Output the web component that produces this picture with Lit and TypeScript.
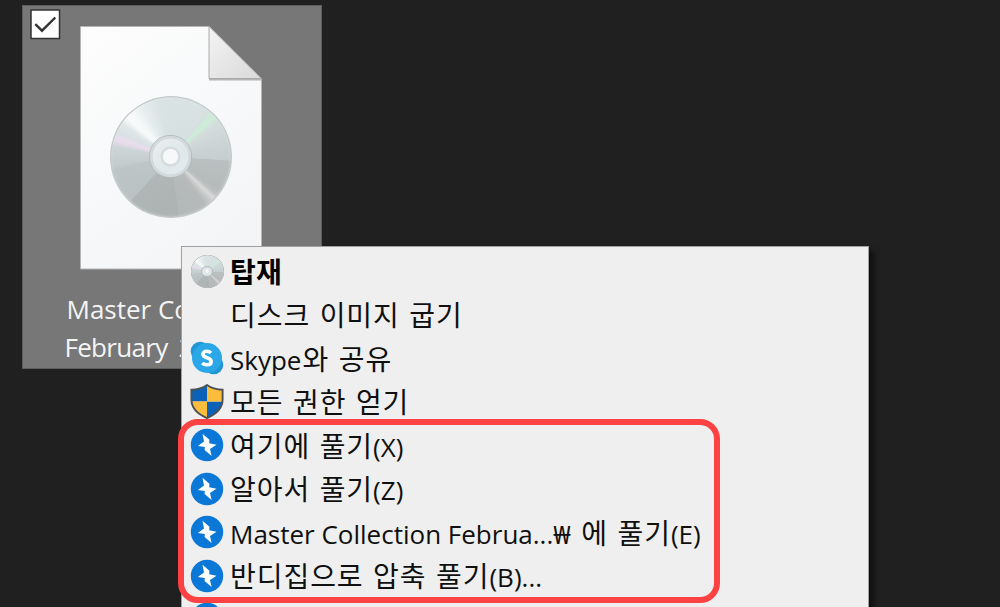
import { LitElement, html, css, svg } from "lit";
import { customElement, property } from "lit/decorators.js";

/** Optical disc, scaled by the font size of its host (1em = diameter). */
@customElement("optical-disc")
class OpticalDisc extends LitElement {
  static styles = css`
    :host { display: block; width: 1em; height: 1em; }
    .face {
      width: 1em; height: 1em; border-radius: 50%;
      display: grid; place-items: center; position: relative;
      background:
        linear-gradient(180deg, rgba(255,255,255,.08), rgba(150,156,156,.1)),
        conic-gradient(
        #d6e1e2 0deg, #d7e0e1 36deg, #d3e0dc 40deg, #ccecd8 44deg, #ccecd8 48deg, #d2dddb 53deg,
        #ccd5d6 72deg, #c6cfd0 93deg, #b9bfc0 94deg, #b7bbbc 124deg, #bfc1c1 129deg, #dedede 134deg,
        #d0d1d1 137deg, #b9bbbc 144deg, #b5babb 172deg, #afb4b5 173deg, #b1b6b7 222deg,
        #bcc4c5 223deg, #bdc6c7 257deg, #c5cecf 262deg, #ccd5d6 280deg, #e7dceb 286deg, #eadff0 290deg,
        #dae1e4 295deg, #e0e7e8 304deg, #fbfdfd 312deg, #f7fafa 318deg, #e6edee 330deg, #d8e2e3 347deg, #d6e1e2 360deg);
      box-shadow: inset 0 0 0 .011em #c3c8c8, inset 0 0 .03em #e5eaea;
    }
    .hub {
      width: .345em; height: .345em; box-sizing: border-box; border-radius: 50%;
      border: max(.012em, .6px) solid #b3bcbe;
      background: linear-gradient(135deg, #eceff0, #dfe8ea 60%, #e4ecee);
      display: grid; place-items: center;
      box-shadow: inset 0 0 0 .022em #d3dadc;
    }
    .hole {
      width: .115em; height: .115em; box-sizing: border-box; border-radius: 50%;
      background: #f6f8f9; box-shadow: 0 0 0 max(.02em, .6px) #d6dcde;
    }
  `;
  render() {
    return html`<div class="face"><div class="hub"><div class="hole"></div></div></div>`;
  }
}

const skype = svg`<svg width="34" height="34" viewBox="0 0 34 34">
  <circle cx="10.3" cy="10.3" r="9.6" fill="#2196d6"/><circle cx="23.7" cy="23.7" r="9.6" fill="#2196d6"/>
  <circle cx="17" cy="17" r="15" fill="#2ba6e7"/>
  <path d="M21 11.9C19.9 10.8 18.6 10.3 16.9 10.3C14.5 10.3 12.9 11.4 12.9 13.3C12.9 17.6 21.2 15.9 21.2 20.4C21.2 22.6 19.4 23.8 16.9 23.8C15 23.8 13.4 23.2 12.3 22" fill="none" stroke="#fff" stroke-width="3.6"/>
</svg>`;

const shield = svg`<svg width="34" height="36" viewBox="0 0 34 36">
  <defs><clipPath id="s"><path d="M17 1.1C13 4 7.4 5.7 1.4 5.8V15.5C1.4 24 8 30.2 17 34.1C26 30.2 32.6 24 32.6 15.5V5.8C26.6 5.7 21 4 17 1.1Z"/></clipPath></defs>
  <g clip-path="url(#s)"><path fill="#0b62b8" d="M0 0H17V17.5H0ZM17 17.5H34V36H17Z"/><path fill="#fdbd3c" d="M17 0H34V17.5H17ZM0 17.5H17V36H0Z"/></g>
  <path d="M17 1.1C13 4 7.4 5.7 1.4 5.8V15.5C1.4 24 8 30.2 17 34.1C26 30.2 32.6 24 32.6 15.5V5.8C26.6 5.7 21 4 17 1.1Z" fill="none" stroke="#4d5153" stroke-width="1.9"/>
</svg>`;

const bolt = svg`<svg width="34" height="34" viewBox="0 0 34 34">
  <circle cx="17" cy="17" r="16.2" fill="#0b78d7"/>
  <path d="M12.5 5.8L19.4 11.8L19.2 15.2L26.5 16.7L20 20.9L21.6 28L14.6 22L14.8 19L7.9 17.9L14 13.4Z" fill="#fff"/>
</svg>`;

const icons: Record<string, unknown> = {
  disc: html`<optical-disc class="small-disc"></optical-disc>`,
  none: "", skype, shield, bolt,
};

/** Splits a caption into Hangul and Latin runs, which use different faces. */
const runs = (text: string) =>
  (text.match(/[\uac00-\ud7a3 ]*[\uac00-\ud7a3][\uac00-\ud7a3 ]*|[^\uac00-\ud7a3]+?(?= ?[\uac00-\ud7a3]|$)/g) ?? [])
    .map((t) => html`<span class=${/[\uac00-\ud7a3]/.test(t) ? "ko" : "la"}>${t}</span>`);

@customElement("menu-item")
class MenuItem extends LitElement {
  @property() icon = "none";
  @property() label = "";
  @property({ type: Boolean }) strong = false;
  static styles = css`
    :host { display: flex; align-items: center; height: 43.5px; flex: none; }
    .icon { width: 34px; height: 36px; margin: 0 6px 0 8px; display: grid; place-items: center; flex: none; }
    .icon svg { display: block; }
    .small-disc { font-size: 33px; filter: drop-shadow(0 0 .6px #777); }
    .label { white-space: pre; color: #101010; font: 26px/40px "Open Sans", "Noto Sans", sans-serif; padding-top: 3px; }
    .ko { font-family: "Noto Sans CJK KR", sans-serif; font-size: 28px; line-height: 1px; letter-spacing: .95px; word-spacing: 2.3px; }
    .la + .ko { margin-left: 1px; }
    .strong .ko { font-weight: 700; color: #000; letter-spacing: .2px; }
  `;
  render() {
    return html`<span class="icon">${icons[this.icon]}</span>
      <span class="label ${this.strong ? "strong" : ""}">${runs(this.label)}</span>`;
  }
}

@customElement("app-root")
class AppRoot extends LitElement {
  static styles = css`
    :host { display: block; position: relative; box-sizing: border-box; width: 1000px; height: 607px; overflow: hidden; background: #202020; padding: 5px 0 0 22px; }
    .tile { position: relative; box-sizing: border-box; width: 300px; height: 364px; background: #777; border: 1.5px solid #5e5e5e; display: flex; flex-direction: column; }
    .check { position: absolute; left: 6.5px; top: 2.5px; }
    .paper { display: grid; margin: 19px 0 0 56px; width: 186px; height: 247px; }
    .paper > * { grid-area: 1 / 1; }
    .paper optical-disc { font-size: 122px; margin: 70.5px 0 0 30.5px; }
    .name { margin: 19px 0 0 43.5px; white-space: pre; color: #f4f4f4; font: 26px/37.5px "Open Sans", "Noto Sans", sans-serif; }
    .second { margin-left: -2px; letter-spacing: -.7px; word-spacing: 5px; }
    .menu { position: absolute; left: 181px; top: 246px; width: 688px; height: 380px; box-sizing: border-box; background: #efefef; border: 1.5px solid #a0a0a0; padding-top: 2.5px; display: flex; flex-direction: column; box-shadow: 5px 5px 5px rgba(0,0,0,.5); }
    .highlight { position: absolute; left: 178px; top: 419px; width: 542px; height: 184px; box-sizing: border-box; border: 6px solid #fc4242; border-radius: 20px; }
  `;
  render() {
    return html`
      <div class="tile">
        <svg class="check" width="31" height="31" viewBox="0 0 31 31">
          <rect x="1" y="1" width="28.5" height="28.5" fill="#fff" stroke="#333" stroke-width="1.5"/>
          <path d="M5.3 15.2L12 21.7L25.3 8.5" fill="none" stroke="#333" stroke-width="2.4"/>
        </svg>
        <div class="paper">
          <svg width="186" height="247" viewBox="0 0 186 247">
            <defs>
              <linearGradient id="p" x2=".6" y2="1"><stop stop-color="#fdfdfd"/><stop offset="1" stop-color="#f3f5f7"/></linearGradient>
              <linearGradient id="f" x2="1" y2="1"><stop stop-color="#f4f4f4"/><stop offset="1" stop-color="#d9d9d9"/></linearGradient>
            </defs>
            <path d="M1.5 1.5H130L182.5 54V244H1.5Z" fill="url(#p)" stroke="#b5b5b5"/>
            <path d="M130 54.5H182" stroke="#888" stroke-width="2" opacity=".6"/>
            <path d="M130 1.5V53.5H182.3Z" fill="url(#f)" stroke="#aaa"/>
          </svg>
          <optical-disc></optical-disc>
        </div>
        <div class="name"><div>Master Co</div><div class="second">February 2</div></div>
      </div>
      <div class="menu">
        <menu-item icon="disc" label="탑재" strong></menu-item>
        <menu-item label="디스크 이미지 굽기"></menu-item>
        <menu-item icon="skype" label="Skype와 공유"></menu-item>
        <menu-item icon="shield" label="모든 권한 얻기"></menu-item>
        <menu-item icon="bolt" label="여기에 풀기(X)"></menu-item>
        <menu-item icon="bolt" label="알아서 풀기(Z)"></menu-item>
        <menu-item icon="bolt" label="Master Collection Februa...₩ 에 풀기(E)"></menu-item>
        <menu-item icon="bolt" label="반디집으로 압축 풀기(B)..."></menu-item>
        <menu-item icon="bolt"></menu-item>
      </div>
      <div class="highlight"></div>`;
  }
}
